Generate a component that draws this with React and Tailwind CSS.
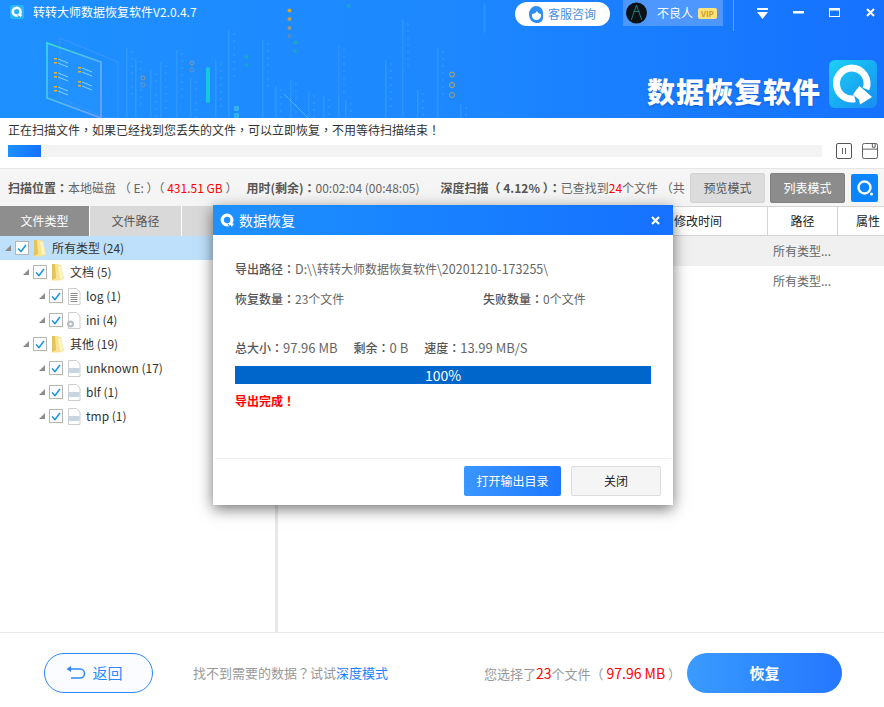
import React from "react";

const FONT = "font-['Noto_Sans_CJK_SC','Noto_Sans',sans-serif]";

// centred punctuation, the way the original UI font draws it
const Pn = ({ children }) => <span className="font-['Noto_Sans_CJK_TC','Noto_Sans_CJK_SC',sans-serif]">{children}</span>;

// small logo, round Q with an arrow tail
const QLogo = ({ size = 14, ring = "#fff", cut = "#1e8cff" }) => (
  <svg width={size} height={size} viewBox="0 0 16 16">
    <circle cx="7.5" cy="7.5" r="5.2" fill="none" stroke={ring} strokeWidth="3.4" />
    <path d="M10 10l5 1.5-2.5 3.5z" fill={ring} />
    <path d="M8.5 11.5l2 3" stroke={cut} strokeWidth="1" />
  </svg>
);

const BigLogo = () => (
  <svg width="42" height="42" viewBox="0 0 42 42">
    <path d="M20 5a15.500 15.500 0 1 0 3 30.700" fill="none" stroke="#fff" strokeWidth="7" />
    <path d="M20 5a15.500 15.500 0 0 1 14 21" fill="none" stroke="#fff" strokeWidth="7" />
    <path d="M25 26l2.500-3 12.500 11-12 7.500-1-5-6-5z" fill="#fff" />
  </svg>
);

const HeaderArt = () => {
  const cols = [126, 135, 150, 160, 176, 190, 215, 228, 262, 275, 290, 308, 323, 338, 345, 385, 402, 417, 437, 460];
  const tops = [48, 58, 70, 62, 50, 78, 60, 30, 40, 86, 80, 92, 96, 46, 100, 60, 20, 90, 48, 104];
  return (
    <svg className="absolute left-0 top-0" width="884" height="118" viewBox="0 0 884 118">
      <defs>
        <linearGradient id="scr" x1="0" y1="0" x2="1" y2="1">
          <stop offset="0" stopColor="#35e0c8" />
          <stop offset="1" stopColor="#7a9cff" />
        </linearGradient>
      </defs>
      <path d="M60 38l58 24v56h-12L60 98V38z" fill="none" stroke="#5a9dff" strokeOpacity="0.5" />
      <path d="M47 43l54 19v56L47 98z" fill="#2a97ff" fillOpacity="0.35" stroke="url(#scr)" strokeWidth="1.6" />
      {[58, 72, 86].map((y) => (
        <g key={y}>
          <rect x="54" y={y} width="3" height="1.5" fill="#f0b429" />
          <rect x="54" y={y + 4} width="3" height="1.5" fill="#f0b429" />
          <path d={`M58 ${y + 1}l10 4M58 ${y + 5}l10 4`} stroke="#7fd4f5" strokeWidth="1" />
        </g>
      ))}
      {[67, 81].map((y) => (
        <g key={y}>
          <rect x="78" y={y} width="3" height="1.5" fill="#f0b429" />
          <rect x="78" y={y + 4} width="3" height="1.5" fill="#f0b429" />
          <path d={`M82 ${y + 1}l10 4M82 ${y + 5}l10 4`} stroke="#7fd4f5" strokeWidth="1" />
        </g>
      ))}
      {cols.map((x, i) => (
        <g key={x}>
          <rect x={x} y={tops[i]} width="1.5" height={118 - tops[i]} fill="#6cc0ff" fillOpacity="0.22" />
          {Array.from({ length: 7 }).map((_, k) => (
            <circle key={k} cx={x + 6} cy={tops[i] + 4 + k * 7} r="0.9" fill="#7cc6ff" fillOpacity="0.25" />
          ))}
        </g>
      ))}
      <rect x="206" y="67" width="4" height="36" rx="2" fill="#16c8dc" />
      <rect x="234" y="106" width="5" height="5" fill="#3cc2e6" fillOpacity="0.7" />
      <rect x="234" y="113" width="5" height="5" fill="#3cc2e6" fillOpacity="0.7" />
      <path d="M284 94l24 24" stroke="#55c8f0" strokeOpacity="0.7" />
      <circle cx="289.500" cy="10.500" r="2" fill="#c7a83c" />
      <circle cx="289.500" cy="19" r="2" fill="#b39f5c" />
      <circle cx="289.500" cy="28" r="2" fill="#8e9a8c" />
      <circle cx="289.500" cy="36" r="2" fill="#6f93a8" fillOpacity="0.6" />
      <circle cx="295.500" cy="42.500" r="2" fill="#19a8c8" />
      <circle cx="295.500" cy="51" r="2" fill="#19a8c8" fillOpacity="0.7" />
      <circle cx="348.500" cy="6" r="2" fill="#12a8c8" />
      <circle cx="246.500" cy="57" r="2" fill="#19a8c8" />
      <circle cx="246.500" cy="65" r="2" fill="#19a8c8" fillOpacity="0.7" />
      <circle cx="192" cy="63" r="2" fill="none" stroke="#8a9a9a" />
      <circle cx="192" cy="70" r="2" fill="none" stroke="#8a9a9a" strokeOpacity="0.7" />
      <circle cx="143" cy="78" r="2" fill="none" stroke="#8a9a9a" />
      <circle cx="143" cy="85" r="2" fill="none" stroke="#8a9a9a" strokeOpacity="0.7" />
      <circle cx="452" cy="74.500" r="2.500" fill="none" stroke="#c9a64a" />
      <circle cx="452" cy="85" r="2.500" fill="none" stroke="#c9a64a" />
      <circle cx="452" cy="95" r="2.500" fill="none" stroke="#a8a060" />
      <rect x="483" y="3" width="3" height="30" rx="1.500" fill="#2f9cf5" fillOpacity="0.5" />
    </svg>
  );
};

const Folder = () => (
  <svg width="14" height="18" viewBox="0 0 14 18" className="shrink-0">
    <path d="M1 1h6l1 1h2l3 14-5 1.500H1z" fill="#f8e391" />
    <path d="M1 1h3l1 14-4 2z" fill="#e6c45c" />
    <path d="M7 3h3l2 12-3 1z" fill="#fdf4c8" />
  </svg>
);

const FileIcon = ({ type }) => (
  <svg width="14" height="17" viewBox="0 0 14 17" className="shrink-0">
    <path d="M1.500 .5h8l3.500 3.500v12.500h-11.500z" fill="#fff" stroke="#cdcdcd" />
    {type === "log" &&
      [5, 7, 9, 11, 13].map((y) => <path key={y} d={`M3.500 ${y + 0.5}h7`} stroke="#8a8a8a" />)}
    {type === "blank" && <rect x="2" y="8" width="10.500" height="5" fill="#c6d6e2" />}
    {type === "ini" && (
      <g>
        <circle cx="3.500" cy="12" r="3.500" fill="#b9bec4" />
        <circle cx="3.500" cy="12" r="1.300" fill="#fff" />
      </g>
    )}
  </svg>
);

const TreeRow = ({ level, label, count, icon, selected }) => {
  const pad = ["pl-[5px]", "pl-[23px]", "pl-[39px]"][level];
  return (
    <div className={`flex h-6 items-center ${pad} ${selected ? "bg-[#bfe0fb]" : ""}`}>
      <svg width="6" height="6" viewBox="0 0 6 6" className="mr-[4px] shrink-0">
        <path d="M6 0v6H0z" fill="#8c8c8c" />
      </svg>
      <div className="mr-[4px] flex h-[14px] w-[14px] shrink-0 items-center justify-center border border-[#b5b5b5] bg-white">
        <svg width="10" height="9" viewBox="0 0 10 9">
          <path d="M1 4.500l3 3 5-6.500" fill="none" stroke="#1b98e0" strokeWidth="1.600" />
        </svg>
      </div>
      <span className="mr-[4px] flex w-[14px] justify-center">
        {icon === "folder" ? <Folder /> : <FileIcon type={icon} />}
      </span>
      <span className="ml-[1px] whitespace-nowrap text-[12px] text-[#333]">
        {label} ({count})
      </span>
    </div>
  );
};

const tree = [
  { level: 0, label: "所有类型", count: 24, icon: "folder", selected: true },
  { level: 1, label: "文档", count: 5, icon: "folder" },
  { level: 2, label: "log", count: 1, icon: "log" },
  { level: 2, label: "ini", count: 4, icon: "ini" },
  { level: 1, label: "其他", count: 19, icon: "folder" },
  { level: 2, label: "unknown", count: 17, icon: "blank" },
  { level: 2, label: "blf", count: 1, icon: "blank" },
  { level: 2, label: "tmp", count: 1, icon: "blank" },
];

const Dialog = () => (
  <div className="absolute left-[213px] top-[205px] flex h-[300px] w-[460px] flex-col bg-white shadow-[0_4px_14px_rgba(0,0,0,0.55)]">
    <div className="flex h-[30px] items-center justify-between bg-gradient-to-r from-[#1e90ff] to-[#1671ff] pl-[7px] pr-[13px]">
      <div className="flex items-center gap-[4px]">
        <QLogo size={15} />
        <span className="text-[14px] text-white">数据恢复</span>
      </div>
      <svg width="9" height="9" viewBox="0 0 9 9">
        <path d="M1 1l7 7M8 1L1 8" stroke="#fff" strokeWidth="2.200" />
      </svg>
    </div>
    <div className="flex-1 px-[22px] text-[12px] text-[#666]">
      <div className="mt-[25px] h-[18px] leading-[18px]">
        <b className="font-medium text-[#555]">导出路径<Pn>：</Pn></b>
        <span className="text-[12.500px]">D:\\</span>转转大师数据恢复软件<span className="text-[12.500px]">\20201210-173255\</span>
      </div>
      <div className="mt-[12px] flex h-[18px] leading-[18px]">
        <div className="w-[248px]">
          <b className="font-medium text-[#555]">恢复数量<Pn>：</Pn></b>23个文件
        </div>
        <div>
          <b className="font-medium text-[#555]">失败数量<Pn>：</Pn></b>0个文件
        </div>
      </div>
      <div className="mt-[31px] flex h-[18px] gap-4 leading-[18px]">
        <div>
          <b className="font-medium text-[#555]">总大小<Pn>：</Pn></b><span className="text-[13px]">97.96 MB</span>
        </div>
        <div>
          <b className="font-medium text-[#555]">剩余<Pn>：</Pn></b><span className="text-[13px]">0 B</span>
        </div>
        <div>
          <b className="font-medium text-[#555]">速度<Pn>：</Pn></b><span className="text-[13px]">13.99 MB/S</span>
        </div>
      </div>
      <div className="mt-[9px] flex h-[18px] w-[416px] items-center justify-center bg-[#0066cc] text-[14px] text-white">
        100%
      </div>
      <div className="mt-[8px] font-bold leading-[18px] text-[#ff0000]">导出完成<Pn>！</Pn></div>
    </div>
    <div className="mx-[2px] flex h-[47px] items-start justify-end gap-[10px] border-t border-[#eeeeee] pr-[10px] pt-[7px]">
      <button className="h-[30px] w-[97px] rounded-[2px] bg-gradient-to-r from-[#3a96ff] to-[#1e78ff] text-[12px] text-white">
        打开输出目录
      </button>
      <button className="h-[30px] w-[90px] rounded-[2px] border border-[#dcdcdc] bg-[#f5f5f5] text-[12px] text-[#222]">
        关闭
      </button>
    </div>
  </div>
);

export default function App() {
  return (
    <div className={`relative flex h-[707px] w-[884px] flex-col overflow-hidden bg-white ${FONT}`}>
      {/* top banner */}
      <div className="relative h-[118px] shrink-0 bg-gradient-to-r from-[#1e90ff] via-[#1d88ff] to-[#1671ff]">
        <HeaderArt />
        <div className="relative flex h-[31px] items-start">
          <div className="ml-[10px] mt-[5px] flex h-[14px] w-[14px] items-center justify-center rounded-[2px] bg-[#29b6f6]">
            <QLogo size={12} />
          </div>
          <span className="ml-[9px] mt-[3px] w-[165px] whitespace-nowrap text-[12px] leading-[18px] text-white">转转大师数据恢复软件V2.0.4.7</span>
          <div className="ml-[317px] mt-[2px] flex h-6 w-[95px] items-center justify-center gap-[5px] rounded-full bg-white">
            <svg width="14" height="17" viewBox="0 0 14 17">
              <path d="M7 0c4 0 7 3 7 7v5c0 3-3 5-6 5-5 0-8-4-8-9 0-4 3-8 7-8z" fill="#2e8cf5" />
              <path d="M3 8c2 0 4-1 5-3 1 2 2 3 4 3v2c0 2-2 4-4.500 4S3 12 3 10z" fill="#fff" />
            </svg>
            <span className="text-[12px] text-[#4a90e2]">客服咨询</span>
          </div>
          <div className="ml-[13px] flex h-[26px] w-[100px] items-center bg-[#4d97ff] pl-[3px]">
            <svg width="21" height="22" viewBox="0 0 20 21">
              <circle cx="10" cy="10.500" r="10" fill="#0c1216" />
              <path d="M10 3l5 14M10 3L5 17M7 9h6" stroke="#1c7a78" fill="none" />
            </svg>
            <span className="ml-[10px] text-[12px] text-white">不良人</span>
            <span className="ml-[5px] rounded-[2px] bg-[#ffe27a] px-[3px] text-[8px] font-bold leading-[11px] text-[#c9a02a]">VIP</span>
          </div>
          <div className="ml-[10px] h-[31px] w-px bg-[#5ea6ff]" />
          <div className="ml-[23px] mt-[8px] flex items-start">
            <svg width="11" height="11" viewBox="0 0 11 11">
              <path d="M0 0h11v2H0zM0 4h11L5.500 11z" fill="#fff" />
            </svg>
            <svg width="11" height="11" viewBox="0 0 11 11" className="ml-[25px]">
              <rect y="3" width="11" height="2.500" fill="#fff" />
            </svg>
            <svg width="11" height="9" viewBox="0 0 11 9" className="ml-[25px]">
              <rect x=".5" y=".5" width="10" height="8" fill="none" stroke="#fff" />
              <rect width="11" height="2.500" fill="#fff" />
            </svg>
            <svg width="9" height="9" viewBox="0 0 9 9" className="ml-[26px]">
              <path d="M1 1l7 7M8 1L1 8" stroke="#fff" strokeWidth="2" />
            </svg>
          </div>
        </div>
        <div className="relative mr-[7px] mt-[29px] flex items-start justify-end">
          <span className="mt-[13px] text-[28px] font-black leading-[36px] tracking-[1px] text-white [text-shadow:0_1px_2px_rgba(0,40,120,0.35)]">数据恢复软件</span>
          <div className="ml-[8px] flex h-12 w-12 items-center justify-center rounded-[6px] bg-gradient-to-br from-[#1fd0f5] to-[#1b8cf0]">
            <BigLogo />
          </div>
        </div>
      </div>

      {/* scan progress */}
      <div className="h-[51px] shrink-0 border-b border-[#e6e6e6] pl-[8px]">
        <div className="mt-[3px] h-[18px] text-[12px] leading-[18px] text-[#333]">
          正在扫描文件<Pn>，</Pn>如果已经找到您丢失的文件<Pn>，</Pn>可以立即恢复<Pn>，</Pn>不用等待扫描结束<Pn>！</Pn>
        </div>
        <div className="mt-[4px] flex items-center">
          <div className="h-3 w-[814px] shrink-0 bg-[#f3f3f3]">
            <div className="h-3 w-[33px] bg-gradient-to-r from-[#1e90ff] to-[#1671ff]" />
          </div>
          <div className="ml-[14px] flex h-4 w-4 shrink-0 items-center justify-center rounded-[2px] border border-[#555]">
            <svg width="6" height="6" viewBox="0 0 6 6">
              <path d="M1.500 0v6M4.500 0v6" stroke="#666" />
            </svg>
          </div>
          <svg width="16" height="16" viewBox="0 0 17 17" className="ml-[10px] shrink-0">
            <rect x=".5" y=".5" width="16" height="16" rx="2" fill="none" stroke="#555" />
            <path d="M.5 6.500h16M11 .5v4h3v-4" fill="none" stroke="#555" />
          </svg>
        </div>
      </div>

      {/* scan info */}
      <div className="flex h-[37px] shrink-0 items-center bg-[#f5f5f5] pl-[8px] text-[12px] text-[#666]">
        <div className="w-[678px] shrink-0 overflow-hidden whitespace-nowrap">
          <b className="font-bold text-[#555]">扫描位置<Pn>：</Pn></b>本地磁盘 （ E: ）（ <span className="text-[#ff0000]">431.51 GB</span> ）
          <b className="ml-[9px] font-bold text-[#555]">用时(剩余)<Pn>：</Pn></b>00:02:04 (00:48:05)
          <b className="ml-[21px] font-bold text-[#555]">深度扫描（ 4.12% ）<Pn>：</Pn></b>已查找到<span className="text-[#ff0000]">24</span>个文件 （共
        </div>
        <button className="ml-[4px] h-[30px] w-[75px] shrink-0 rounded-[2px] border border-[#d2d2d2] bg-[#dcdcdc] text-[#555]">预览模式</button>
        <button className="ml-[5px] h-[30px] w-[75px] shrink-0 rounded-[2px] border border-[#808080] bg-[#8c8c8c] text-white">列表模式</button>
        <div className="ml-[6px] flex h-7 w-[27px] shrink-0 items-center justify-center rounded-[2px] bg-[#0a84ff]">
          <svg width="18" height="18" viewBox="0 0 18 18">
            <circle cx="8.500" cy="8.500" r="6" fill="none" stroke="#fff" strokeWidth="2.400" />
            <circle cx="15.500" cy="15" r="1.500" fill="#fff" />
          </svg>
        </div>
      </div>

      {/* main split */}
      <div className="flex min-h-0 flex-1">
        <div className="w-[275px] shrink-0 overflow-hidden">
          <div className="flex h-[30px] text-[12px]">
            <div className="flex w-[89px] items-center justify-center bg-[#8e8e8e] text-white">文件类型</div>
            <div className="ml-px flex w-[91px] items-center justify-center bg-[#d9d9d9] text-[#555]">文件路径</div>
            <div className="ml-px flex flex-1 items-center justify-center bg-[#d9d9d9] text-[#555]">预览</div>
          </div>
          {tree.map((row) => (
            <TreeRow key={row.label} {...row} />
          ))}
        </div>
        <div className="w-[3px] shrink-0 bg-[#e8e8e8]" />
        <div className="min-w-0 flex-1 text-[12px]">
          <div className="flex h-[30px] border-y border-[#d4d4d4] text-[#222]">
            <div className="flex flex-1 items-center justify-end pr-[45px]">修改时间</div>
            <div className="flex w-[70px] items-center justify-center border-l border-[#d4d4d4]">路径</div>
            <div className="flex w-[47px] items-center border-l border-[#d4d4d4] pl-[18px]">属性</div>
          </div>
          <div className="flex h-[30px] items-center bg-[#f0f0f0] pl-[495px] text-[#666]">所有类型...</div>
          <div className="flex h-[30px] items-center pl-[495px] text-[#666]">所有类型...</div>
        </div>
      </div>

      {/* bottom bar */}
      <div className="flex h-[75px] shrink-0 items-start border-t border-[#eaeaea] pt-[20px]">
        <button className="ml-[44px] flex h-10 w-[109px] items-center justify-center gap-[6px] rounded-full border border-[#2b88ff] bg-[#fbfcff] pr-[8px] text-[15px] text-[#2b88ff]">
          <svg width="20" height="14" viewBox="0 0 20 14">
            <path d="M3 3h11a4 4 0 0 1 0 9H5" fill="none" stroke="#2b88ff" strokeWidth="1.500" />
            <path d="M5 0L0.500 3 5 6z" fill="#2b88ff" />
          </svg>
          返回
        </button>
        <div className="ml-[40px] mt-[11px] w-[291px] text-[13px] leading-[18px] text-[#999]">
          找不到需要的数据<Pn>？</Pn>试试<span className="text-[#1a82ff]">深度模式</span>
        </div>
        <div className="mt-[11px] w-[203px] whitespace-nowrap text-[13px] leading-[18px] text-[#999]">
          您选择了<span className="text-[14px] text-[#ff0000]">23</span>个文件（ <span className="text-[14px] text-[#ff0000]">97.96 MB</span> ）
        </div>
        <button className="h-10 w-[155px] rounded-full bg-gradient-to-r from-[#3a9bff] to-[#2577ff] text-[15px] font-bold text-white">
          恢复
        </button>
      </div>

      <Dialog />
    </div>
  );
}
